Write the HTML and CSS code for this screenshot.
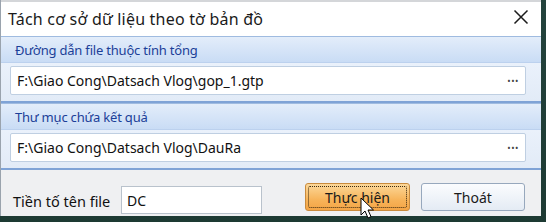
FILE: index.html
```html
<!DOCTYPE html>
<html lang="vi">
<head>
<meta charset="utf-8">
<title>Tách cơ sở dữ liệu theo tờ bản đồ</title>
<link rel="stylesheet" href="styles.css">
</head>
<body>
<div class="screen">
  <div class="window">
    <div class="titlebar">
      <span class="title">Tách cơ sở dữ liệu theo tờ bản đồ</span>
      <span class="close">
        <svg width="16" height="16" viewBox="0 0 16 16"><path d="M1.5 1.5 L14.5 14.5 M14.5 1.5 L1.5 14.5" stroke="#1b1b1b" stroke-width="1.5" fill="none"/></svg>
      </span>
    </div>
    <div class="group">
      <div class="group-head">Đường dẫn file thuộc tính tổng</div>
      <div class="group-body">
        <div class="field">
          <span class="field-text">F:\Giao Cong\Datsach Vlog\gop_1.gtp</span>
          <span class="dots">•••</span>
        </div>
      </div>
    </div>
    <div class="group">
      <div class="group-head">Thư mục chứa kết quả</div>
      <div class="group-body">
        <div class="field">
          <span class="field-text">F:\Giao Cong\Datsach Vlog\DauRa</span>
          <span class="dots">•••</span>
        </div>
      </div>
    </div>
    <div class="footer">
      <span class="label">Tiền tố tên file</span>
      <div class="prefix">DC</div>
      <div class="btn btn-primary"><span class="focus">Thực hiện</span></div>
      <div class="btn btn-secondary">Thoát</div>
    </div>
    <svg class="cursor" width="16" height="24" viewBox="0 0 16 24"><path d="M1 1 L1 18 L5 14 L8 21 L11 19.6 L8 13 L13.5 13 Z" fill="#fff" stroke="#000" stroke-width="1" stroke-linejoin="round"/></svg>
  </div>
</div>
</body>
</html>
```

FILE: styles.css
```css
* { box-sizing: border-box; }
html, body { margin: 0; padding: 0; }
body {
  width: 546px;
  height: 222px;
  overflow: hidden;
  background: #24433d;
  font-family: "Noto Sans", "Liberation Sans", sans-serif;
}
.screen {
  width: 546px;
  height: 222px;
  background: linear-gradient(#24433d, #1d3a33);
}
.window {
  position: relative;
  width: 541px;
  height: 216px;
  background: #eef0f3;
  border-left: 1px solid #9aa3ad;
  display: flex;
  flex-direction: column;
}
.titlebar {
  height: 36px;
  background: #ffffff;
  border-top: 2px solid #d4d6d9;
  display: flex;
  align-items: center;
  justify-content: space-between;
  padding: 0 12px 0 7px;
}
.title {
  font-size: 16px;
  color: #1a1a1a;
  letter-spacing: 0.2px;
}
.close {
  display: flex;
  margin-top: -4px;
}
.group {
  border-top: 1px solid #9fbbe0;
  border-bottom: 2px solid #7fa3d6;
  height: 67px;
  display: flex;
  flex-direction: column;
}
.group-head {
  height: 26px;
  background: linear-gradient(#e3edfa, #c9dcf5);
  color: #1c3f98;
  font-size: 13px;
  letter-spacing: -0.2px;
  display: flex;
  align-items: center;
  padding-left: 14px;
  border-bottom: 1px solid #bcd1ee;
}
.group-body {
  flex: 1;
  background: linear-gradient(#eaf1fb, #e2ebf7);
  padding: 3px 15px 0 9px;
}
.field {
  height: 29px;
  background: #ffffff;
  border: 1px solid #bfcfe2;
  border-radius: 2px;
  display: flex;
  align-items: center;
  justify-content: space-between;
  padding: 0 6px 0 6px;
  font-size: 14px;
  color: #111;
}
.dots {
  font-size: 9px;
  color: #444;
  letter-spacing: 0.5px;
}
.footer {
  flex: 1;
  display: flex;
  align-items: flex-start;
  padding: 13px 15px 0 12px;
  background: #eff0f2;
}
.label {
  font-size: 14.5px;
  color: #111;
  width: 108px;
  margin-top: 8px;
}
.prefix {
  width: 141px;
  height: 28px;
  margin-top: 3px;
  background: #fff;
  border: 1px solid #b9c2cc;
  font-size: 14px;
  color: #111;
  display: flex;
  align-items: center;
  padding-left: 5px;
}
.btn {
  height: 28px;
  border-radius: 3px;
  display: flex;
  align-items: center;
  justify-content: center;
  font-size: 14px;
  color: #1a1a1a;
}
.btn-primary {
  width: 105px;
  margin-left: 43px;
  background: linear-gradient(#fcd89a, #f7b45a 60%, #f4a445);
  border: 1px solid #c98b3e;
  padding: 2px;
}
.focus {
  flex: 1;
  align-self: stretch;
  border: 1.5px dotted #3b2a10;
  border-radius: 2px;
  display: flex;
  align-items: center;
  justify-content: center;
}
.btn-secondary {
  width: 104px;
  margin-left: 11px;
  background: linear-gradient(#fbfcfe, #e4ebf4);
  border: 1px solid #97a8bd;
}
.cursor {
  position: absolute;
  left: 359px;
  top: 197px;
}
```
